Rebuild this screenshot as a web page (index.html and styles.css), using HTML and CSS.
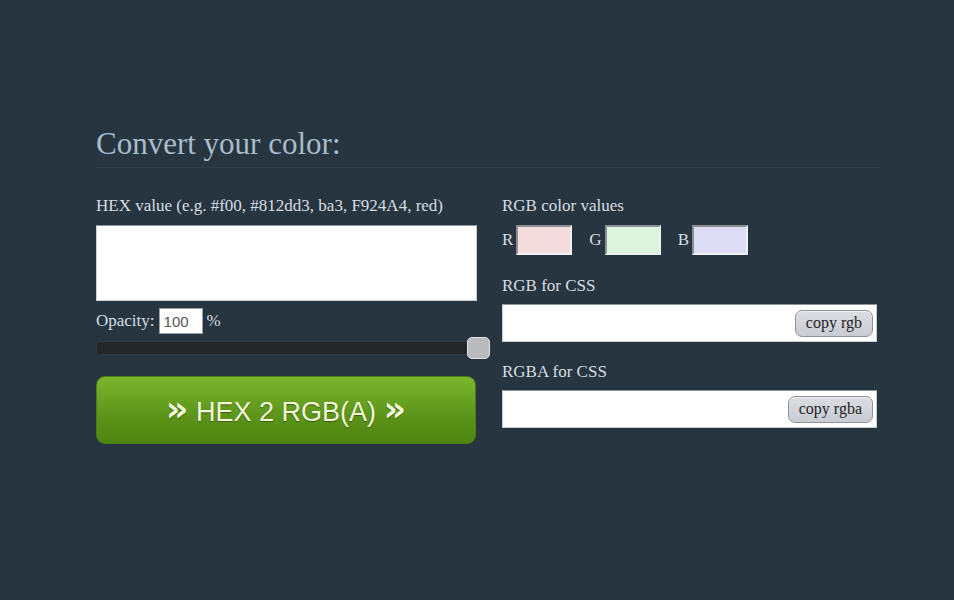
FILE: index.html
```html
<!DOCTYPE html>
<html lang="en">
<head>
    <meta charset="UTF-8">
    <title>HEX 2 RGB(A)</title>
    <link rel="stylesheet" href="styles.css">
</head>
<body>
    <div class="converter">
        <h2>Convert your color:</h2>

        <div class="columns">
            <div class="left">
                <label class="label" for="hex">HEX value (e.g. #f00, #812dd3, ba3, F924A4, red)</label>
                <textarea id="hex" class="hex-input"></textarea>

                <div class="opacity-row">
                    <span>Opacity:</span>
                    <input type="text" class="opacity-input" value="100">
                    <span>%</span>
                </div>
                <input type="range" class="slider" min="0" max="100" value="100">

                <button class="convert-btn"><span class="arr">&raquo;</span> HEX 2 RGB(A) <span class="arr">&raquo;</span></button>
            </div>

            <div class="right">
                <div class="label">RGB color values</div>
                <div class="rgb-row">
                    <span>R</span><input type="text" class="channel red">
                    <span>G</span><input type="text" class="channel green">
                    <span>B</span><input type="text" class="channel blue">
                </div>

                <div class="label css-label">RGB for CSS</div>
                <div class="css-field">
                    <input type="text">
                    <button class="copy-btn">copy rgb</button>
                </div>

                <div class="label css-label">RGBA for CSS</div>
                <div class="css-field">
                    <input type="text">
                    <button class="copy-btn">copy rgba</button>
                </div>
            </div>
        </div>
    </div>
</body>
</html>
```

FILE: styles.css
```css
/* base */
body {
    margin: 0;
    background: #263540;
    color: #d6dde2;
    font-family: "Liberation Serif", serif;
    font-size: 17px;
}

.converter {
    width: 785px;
    margin: 126px 0 0 96px;
}

h2 {
    margin: 0;
    padding-bottom: 5px;
    font-weight: normal;
    font-size: 31px;
    color: #a8bccb;
    border-bottom: 1px solid #2f404b;
}

.columns {
    display: grid;
    grid-template-columns: 380px 375px;
    column-gap: 26px;
    margin-top: 28px;
}

.label {
    display: block;
    line-height: 19px;
    color: #d6dde2;
}

/* left side */
.hex-input {
    display: block;
    box-sizing: border-box;
    width: 381px;
    height: 76px;
    margin-top: 10px;
    border: 1px solid #c9cdd0;
    border-top-color: #8c9398;
    background: #fff;
    resize: none;
}

.opacity-row {
    display: flex;
    align-items: center;
    gap: 4px;
    margin-top: 7px;
}

.opacity-input {
    box-sizing: border-box;
    width: 44px;
    height: 26px;
    padding: 0 4px;
    border: 1px solid #9aa0a5;
    font-family: "Liberation Sans", Arial, sans-serif;
    font-size: 15px;
    color: #555;
}

.slider {
    -webkit-appearance: none;
    appearance: none;
    display: block;
    width: 395px;
    height: 22px;
    margin: 3px 0 0;
    background: transparent;
}

.slider::-webkit-slider-runnable-track {
    height: 14px;
    border-radius: 4px;
    background: #242628;
    border: 1px solid #333a3f;
}

.slider::-webkit-slider-thumb {
    -webkit-appearance: none;
    width: 23px;
    height: 22px;
    margin-top: -5px;
    border-radius: 5px;
    background: #b9bbbc;
    border: 1px solid #e1e3e4;
}

.convert-btn {
    display: block;
    width: 380px;
    height: 68px;
    margin-top: 17px;
    border: 1px solid #4d7d17;
    border-radius: 9px;
    background: linear-gradient(#7cb62f, #5b9419 60%, #4e8410);
    color: #f3f6d8;
    font-family: "Liberation Sans", Arial, sans-serif;
    font-size: 27px;
    text-shadow: 0 1px 1px #3b5e10;
    cursor: pointer;
}

.arr {
    font-family: "DejaVu Sans", sans-serif;
    font-weight: bold;
    font-size: 35px;
    line-height: 1;
}

/* right side */
.rgb-row {
    display: flex;
    align-items: center;
    margin-top: 10px;
    height: 30px;
}

.rgb-row span {
    margin-right: 3px;
}

.channel {
    box-sizing: border-box;
    width: 56px;
    height: 30px;
    margin-right: 17px;
    border: 2px solid #eef0f1;
    border-top-color: #8a8f93;
    border-left-color: #8a8f93;
}

.red { background: #f5dcdc; }
.green { background: #dcf5dc; }
.blue { background: #dcdcf5; }

.css-label {
    margin-top: 21px;
}

.css-field {
    display: flex;
    align-items: center;
    justify-content: flex-end;
    box-sizing: border-box;
    width: 375px;
    height: 38px;
    margin-top: 9px;
    padding-right: 3px;
    background: #fff;
    border: 1px solid #c9cdd0;
    border-top-color: #8c9398;
}

.css-field input {
    flex: 1;
    border: none;
    height: 30px;
    outline: none;
}

.css-field + .css-label {
    margin-top: 20px;
}

.copy-btn {
    height: 27px;
    padding: 0 10px;
    border: 1px solid #8e9298;
    border-radius: 7px;
    background: linear-gradient(#dcdee3, #c8cbd2);
    font-family: "Liberation Serif", serif;
    font-size: 16px;
    color: #222;
    box-shadow: inset 0 1px 0 #f0f1f3;
}
```
